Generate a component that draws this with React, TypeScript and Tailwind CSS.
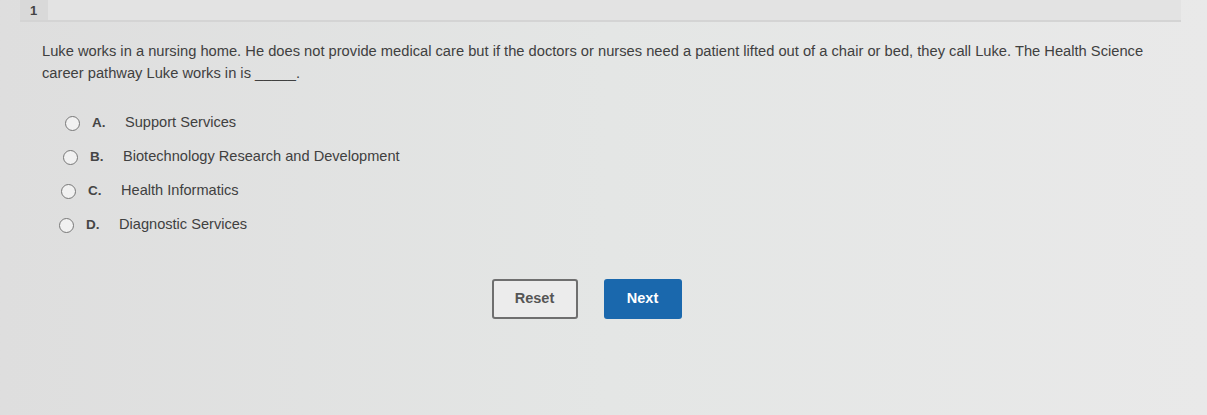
import { useState } from "react";

const options = [
  { key: "A", label: "Support Services" },
  { key: "B", label: "Biotechnology Research and Development" },
  { key: "C", label: "Health Informatics" },
  { key: "D", label: "Diagnostic Services" },
];

export default function App() {
  const [picked, setPicked] = useState<string | null>(null);

  return (
    <div
      className="w-[1207px] h-[415px] overflow-hidden bg-gradient-to-r from-[#dedede] via-[#e4e6e5] to-[#e9e9e9] text-[#3b3b3b]"
      style={{ fontFamily: '"Liberation Sans", Arial, sans-serif' }}
    >
      {/* question header */}
      <div className="ml-[20px] mr-[26px] h-[22px] flex border-b-2 border-[#d4d4d4]">
        <div className="w-[28px] bg-[#d9d9d9] text-[13px] font-bold text-[#444] pl-[10px] pt-[1px]">1</div>
        <div className="flex-1 bg-[#e3e3e3]" />
      </div>

      <p className="ml-[42px] w-[1112px] mt-[18px] text-[14.7px] leading-[22px] text-[#404040]">
        Luke works in a nursing home. He does not provide medical care but if the doctors or nurses need a patient
        lifted out of a chair or bed, they call Luke. The Health Science career pathway Luke works in is _____.
      </p>

      <div className="mt-[28px] ml-[65px] flex flex-col gap-[12px]">
        {options.map((o, i) => (
          <button
            key={o.key}
            onClick={() => setPicked(o.key)}
            className="flex items-center h-[22px] text-left"
            style={{ marginLeft: -i * 2 }}
          >
            <span className="w-[15px] h-[15px] rounded-full border-[1.5px] border-[#777] bg-[#f1f1f1] flex items-center justify-center">
              {picked === o.key && <span className="w-[7px] h-[7px] rounded-full bg-[#1b6bb0]" />}
            </span>
            <span className="ml-[12px] w-[33px] text-[13.5px] font-bold text-[#454545]">{o.key}.</span>
            <span className="text-[14.6px] text-[#404040]">{o.label}</span>
          </button>
        ))}
      </div>

      <div className="mt-[43px] flex justify-center gap-[26px] pr-[34px]">
        <button
          onClick={() => setPicked(null)}
          className="w-[86px] h-[40px] rounded-[3px] border-2 border-[#6f6f6f] bg-[#ececec] text-[14.5px] font-bold text-[#555]"
        >
          Reset
        </button>
        <button className="w-[78px] h-[40px] rounded-[3px] bg-[#1a68ad] text-[14.5px] font-bold text-white">Next</button>
      </div>
    </div>
  );
}
